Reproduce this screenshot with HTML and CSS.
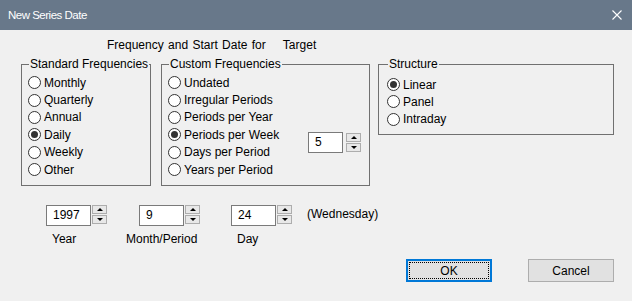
FILE: index.html
```html
<!DOCTYPE html>
<html lang="en">
<head>
    <meta charset="UTF-8">
    <meta name="viewport" content="width=device-width, initial-scale=1.0">
    <title>New Series Date</title>
    <link rel="stylesheet" href="styles.css">
</head>
<body>

<div class="titlebar">
    <span class="title">New Series Date</span>
    <svg class="close" width="10" height="10" viewBox="0 0 10 10">
        <path d="M0.5 0.5 L9.5 9.5 M9.5 0.5 L0.5 9.5" stroke="#fff" stroke-width="1.1" fill="none"/>
    </svg>
</div>

<div class="dialog">
    <div class="heading">Frequency and Start Date for&nbsp;&nbsp;&nbsp; Target</div>

    <div class="groups">
        <fieldset class="group group-std">
            <legend>Standard Frequencies</legend>
            <div class="radios">
                <div class="radio"><span class="dot"></span>Monthly</div>
                <div class="radio"><span class="dot"></span>Quarterly</div>
                <div class="radio"><span class="dot"></span>Annual</div>
                <div class="radio"><span class="dot checked"></span>Daily</div>
                <div class="radio"><span class="dot"></span>Weekly</div>
                <div class="radio"><span class="dot"></span>Other</div>
            </div>
        </fieldset>

        <fieldset class="group group-custom">
            <legend>Custom Frequencies</legend>
            <div class="custom-body">
                <div class="radios">
                    <div class="radio"><span class="dot"></span>Undated</div>
                    <div class="radio"><span class="dot"></span>Irregular Periods</div>
                    <div class="radio"><span class="dot"></span>Periods per Year</div>
                    <div class="radio"><span class="dot checked"></span>Periods per Week</div>
                    <div class="radio"><span class="dot"></span>Days per Period</div>
                    <div class="radio"><span class="dot"></span>Years per Period</div>
                </div>
                <div class="spin spin-custom">
                    <div class="spin-box">5</div>
                    <div class="spin-btns">
                        <span class="spin-btn"><span class="arrow-up"></span></span>
                        <span class="spin-btn"><span class="arrow-down"></span></span>
                    </div>
                </div>
            </div>
        </fieldset>

        <fieldset class="group group-struct">
            <legend>Structure</legend>
            <div class="radios">
                <div class="radio"><span class="dot checked"></span>Linear</div>
                <div class="radio"><span class="dot"></span>Panel</div>
                <div class="radio"><span class="dot"></span>Intraday</div>
            </div>
        </fieldset>
    </div>

    <div class="date-row">
        <div class="spin spin-year">
            <div class="spin-box">1997</div>
            <div class="spin-btns">
                <span class="spin-btn"><span class="arrow-up"></span></span>
                <span class="spin-btn"><span class="arrow-down"></span></span>
            </div>
        </div>
        <div class="spin spin-month">
            <div class="spin-box">9</div>
            <div class="spin-btns">
                <span class="spin-btn"><span class="arrow-up"></span></span>
                <span class="spin-btn"><span class="arrow-down"></span></span>
            </div>
        </div>
        <div class="spin spin-day">
            <div class="spin-box">24</div>
            <div class="spin-btns">
                <span class="spin-btn"><span class="arrow-up"></span></span>
                <span class="spin-btn"><span class="arrow-down"></span></span>
            </div>
        </div>
        <div class="weekday">(Wednesday)</div>
    </div>

    <div class="date-labels">
        <span class="label-year">Year</span>
        <span class="label-month">Month/Period</span>
        <span>Day</span>
    </div>

    <div class="buttons">
        <button class="btn btn-default">OK</button>
        <button class="btn">Cancel</button>
    </div>
</div>

</body>
</html>
```

FILE: styles.css
```css
body {
    margin: 0;
    background-color: #f0f0f0;
    font-family: "Liberation Sans", Arial, sans-serif;
    font-size: 12px;
    color: #000;
}
.titlebar {
    height: 30px;
    background-color: #68788a;
    display: flex;
    align-items: center;
    justify-content: space-between;
    padding: 0 10px 0 8px;
    color: #fff;
}
.title {
    font-size: 11.5px;
    letter-spacing: -0.5px;
}
.close {
    display: block;
}
.dialog {
    height: 271px;
}
.heading {
    margin-top: 7px;
    padding-left: 107px;
    line-height: 16px;
    word-spacing: 1px;
}
.groups {
    display: flex;
    align-items: flex-start;
    margin-top: 4px;
    padding-left: 21px;
}
.group {
    box-sizing: border-box;
    margin: 0;
    padding: 0 0 0 6px;
    min-width: 0;
    border: 1px solid #707070;
}
.group legend {
    margin-left: 1px;
    padding: 0 1px;
    line-height: 14px;
}
.group-std {
    width: 130px;
    height: 129px;
}
.group-custom {
    width: 209px;
    height: 129px;
    margin-left: 10px;
}
.group-struct {
    width: 236px;
    height: 78px;
    margin-left: 8px;
    padding-left: 8px;
}
.radios {
    padding-top: 3px;
}
.group-struct .radios {
    padding-top: 5px;
}
.radio {
    display: flex;
    align-items: center;
    height: 17.4px;
    white-space: nowrap;
}
.group-struct .radio {
    height: 17.3px;
}
.dot {
    position: relative;
    flex: none;
    box-sizing: border-box;
    width: 13px;
    height: 13px;
    margin-right: 3px;
    border: 1px solid #333;
    border-radius: 50%;
    background-color: #fff;
}
.dot.checked::after {
    content: "";
    position: absolute;
    left: 2px;
    top: 2px;
    width: 7px;
    height: 7px;
    border-radius: 50%;
    background-color: #333;
}
.custom-body {
    display: flex;
    align-items: flex-start;
}
.custom-body .radios {
    width: 140px;
    flex: none;
}
.spin {
    display: flex;
    align-items: flex-start;
}
.spin-custom {
    margin-top: 61px;
}
.spin-custom .spin-box {
    width: 35px;
}
.spin-custom .spin-btns {
    margin-left: 3px;
    padding-top: 1px;
}
.spin-box {
    box-sizing: border-box;
    width: 45px;
    height: 21px;
    padding-left: 6px;
    border: 1px solid #7a7a7a;
    background-color: #fff;
    line-height: 19px;
}
.spin-btns {
    display: flex;
    flex-direction: column;
    gap: 1px;
    margin-left: 1px;
}
.spin-btn {
    box-sizing: border-box;
    width: 15px;
    height: 9px;
    border: 1px solid #adadad;
    background-color: #e8e8e8;
    display: flex;
    align-items: center;
    justify-content: center;
}
.arrow-up {
    border-left: 3px solid transparent;
    border-right: 3px solid transparent;
    border-bottom: 3px solid #000;
}
.arrow-down {
    border-left: 3px solid transparent;
    border-right: 3px solid transparent;
    border-top: 3px solid #000;
}
.date-row {
    display: flex;
    align-items: flex-start;
    margin-top: 19px;
    padding-left: 46px;
}
.spin-month {
    margin-left: 32px;
}
.spin-day {
    margin-left: 31px;
}
.weekday {
    margin-left: 15px;
    line-height: 19px;
}
.date-labels {
    display: flex;
    margin-top: 5px;
    padding-left: 52px;
    line-height: 16px;
}
.label-year {
    width: 74px;
}
.label-month {
    width: 111px;
}
.buttons {
    display: flex;
    justify-content: flex-end;
    gap: 36px;
    margin-top: 12px;
    padding-right: 18px;
}
.btn {
    box-sizing: border-box;
    width: 86px;
    height: 23px;
    padding: 0;
    border: 1px solid #adadad;
    background-color: #e1e1e1;
    font-family: inherit;
    font-size: 12px;
    color: #000;
}
.btn-default {
    border: 2px solid #0078d7;
    outline: 1px dotted #000;
    outline-offset: -4px;
}
```
